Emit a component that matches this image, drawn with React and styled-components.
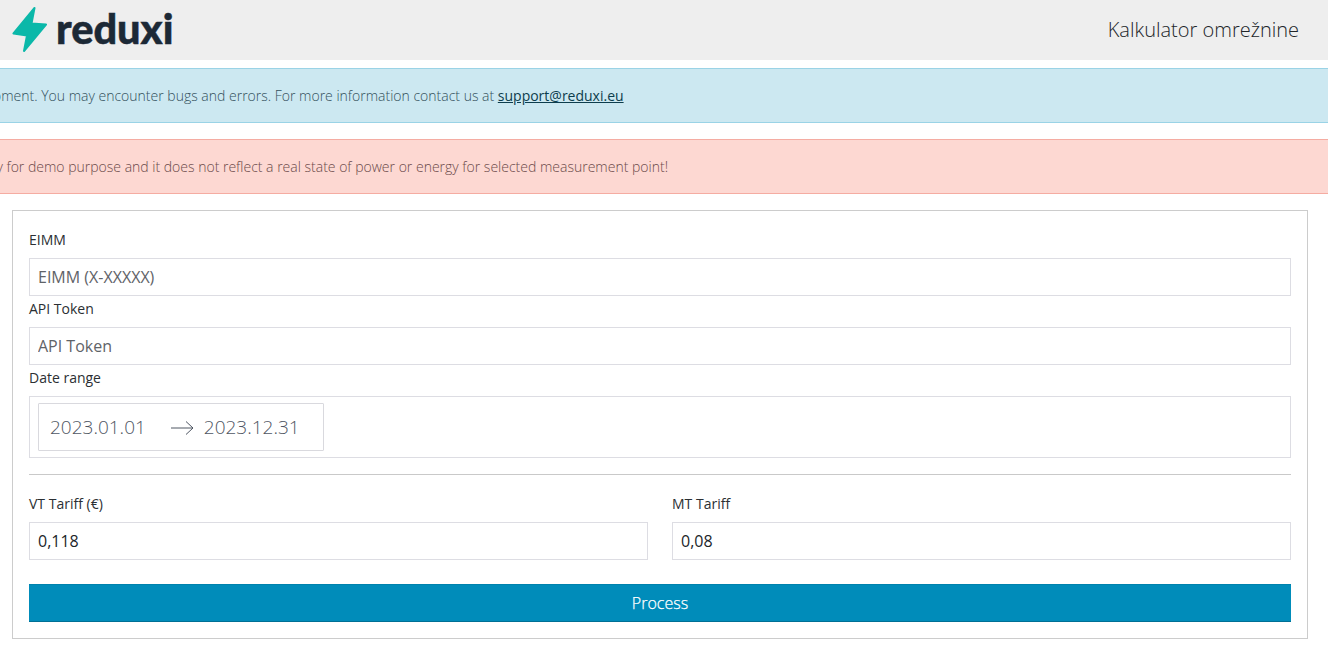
import React from "react";
import styled, { createGlobalStyle } from "styled-components";

const Global = createGlobalStyle`
  html, body { margin: 0; padding: 0; background: #fff; overflow: hidden; }
  body { font-family: "Open Sans", "Noto Sans", sans-serif; font-size: 14px; color: #212529; }
  * { box-sizing: border-box; }
`;

const Page = styled.div`
  width: 1328px;
  height: 645px;
  overflow: hidden;
`;

const Header = styled.header`
  height: 60px;
  background: #eeeeee;
  display: flex;
  align-items: center;
  justify-content: space-between;
  padding: 0 29px 2px 12px;
`;

const Brand = styled.div`
  display: flex;
  align-items: center;
  gap: 8px;
`;

const BrandName = styled.span`
  font-family: "Lato", sans-serif;
  font-weight: 900;
  font-size: 41.5px;
  line-height: 1;
  color: #1c2936;
  -webkit-text-stroke: 0.5px #1c2936;
`;

const Title = styled.div`
  font-size: 20px;
  font-weight: 300;
  color: #212529;
`;

const Alert = styled.div`
  height: 55px;
  margin: 8px 0 16px;
  display: flex;
  align-items: center;
  white-space: nowrap;
  font-size: 14px;
  font-weight: 300;
  color: ${(p) => p.$color};
  background: ${(p) => p.$bg};
  border-top: 1px solid ${(p) => p.$line};
  border-bottom: 1px solid ${(p) => p.$line};
  overflow: hidden;
`;

const AlertText = styled.span`
  margin-left: ${(p) => p.$offset}px;
  flex: none;
`;

const AlertLink = styled.a`
  color: #0c3d4d;
  font-weight: 400;
  text-decoration: underline;
`;

const Card = styled.form`
  margin: 0 20px 0 12px;
  height: 429px;
  border: 1px solid #cccccc;
  padding: 16px;
`;

const Label = styled.label`
  display: block;
  height: ${(p) => p.$h || 31}px;
  padding-top: ${(p) => p.$top || 3}px;
  line-height: 20px;
  font-size: 14px;
  color: #2b2f33;
`;

const Input = styled.input`
  display: block;
  width: 100%;
  height: 38px;
  padding: 0 8px;
  font-family: inherit;
  font-size: 16px;
  color: #212529;
  background: #fff;
  border: 1px solid #dddde3;
  border-radius: 0;
  outline: none;
  &::placeholder { color: #5f6368; opacity: 1; }
`;

const RangeField = styled.div`
  height: 62px;
  border: 1px solid #dddde3;
  padding: 6px 8px;
`;

const RangeBox = styled.div`
  width: 286px;
  height: 48px;
  border: 1px solid #d9d9de;
  border-radius: 1px;
  display: flex;
  align-items: center;
  padding-left: 11px;
  font-size: 19px;
  font-weight: 300;
  color: #4f5663;
`;

const RangeArrow = styled.svg`
  width: 23px;
  height: 16px;
  margin: 1px 10px 0 25px;
  flex: none;
`;

const Divider = styled.hr`
  margin: 16px 0 14px;
  border: 0;
  border-top: 1px solid #c9c9c9;
`;

const Columns = styled.div`
  display: grid;
  grid-template-columns: 1fr 1fr;
  gap: 24px;
`;

const Submit = styled.button`
  display: block;
  width: 100%;
  height: 38px;
  margin-top: 24px;
  border: 0;
  border-top: 1px solid #0082ad;
  border-bottom: 1px solid #007095;
  border-radius: 0;
  background: #008cba;
  color: #fff;
  font-family: inherit;
  font-size: 16px;
  font-weight: 300;
  -webkit-text-stroke: 0.25px #fff;
`;

const Bolt = () => (
  <svg width="36" height="46" viewBox="0 0 36 46" aria-hidden="true">
    <path
      d="M22.5 2 L1.5 27.5 L15 29.5 L12 45 L34 18.5 L19.5 17.5 Z"
      fill="#0bb8a9"
      stroke="#0bb8a9"
      strokeWidth="2"
      strokeLinejoin="round"
    />
  </svg>
);

export default function App() {
  return (
    <Page>
      <Global />
      <Header>
        <Brand>
          <Bolt />
          <BrandName>reduxi</BrandName>
        </Brand>
        <Title>Kalkulator omrežnine</Title>
      </Header>
      <Alert $bg="#cce8f1" $line="#9ad3e6" $color="#33505c">
        <AlertText $offset={-205}>
          This application is under development. You may encounter bugs and errors. For more information contact us at{" "}
          <AlertLink href="#">support@reduxi.eu</AlertLink>
        </AlertText>
      </Alert>
      <Alert $bg="#fdd8d2" $line="#f5aca2" $color="#6b4a4a">
        <AlertText $offset={-142}>
          This data is shown only for demo purpose and it does not reflect a real state of power or energy for selected measurement point!
        </AlertText>
      </Alert>
      <Card onSubmit={(e) => e.preventDefault()}>
        <Label>EIMM</Label>
        <Input placeholder="EIMM (X-XXXXX)" />
        <Label>API Token</Label>
        <Input placeholder="API Token" />
        <Label>Date range</Label>
        <RangeField>
          <RangeBox>
            <span>2023.01.01</span>
            <RangeArrow viewBox="0 0 23 16" aria-hidden="true">
              <path d="M0 8 H22 M15 1.5 L22 8 L15 14.5" fill="none" stroke="#4f5663" strokeWidth="1" />
            </RangeArrow>
            <span>2023.12.31</span>
          </RangeBox>
        </RangeField>
        <Divider />
        <Columns>
          <div>
            <Label $h={33} $top={5}>VT Tariff (€)</Label>
            <Input defaultValue="0,118" />
          </div>
          <div>
            <Label $h={33} $top={5}>MT Tariff</Label>
            <Input defaultValue="0,08" />
          </div>
        </Columns>
        <Submit type="submit">Process</Submit>
      </Card>
    </Page>
  );
}
